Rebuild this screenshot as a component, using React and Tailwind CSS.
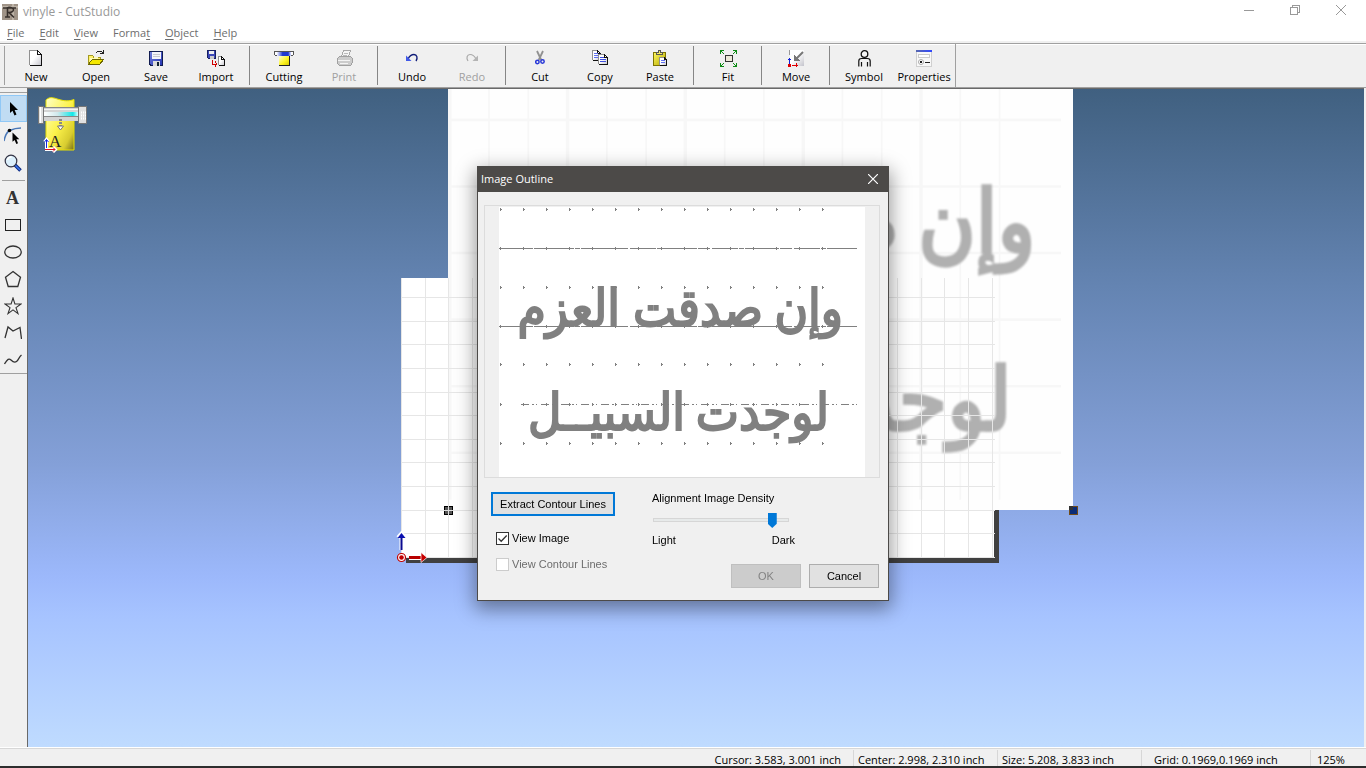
import React, { useState } from "react";

/* ---------- toolbar icons ---------- */

const Icon = ({ w = 16, h = 16, children, smooth }) => (
  <svg width={w} height={h} viewBox={`0 0 ${w} ${h}`} fill="none" shapeRendering={smooth ? "auto" : "crispEdges"} aria-hidden="true">
    {children}
  </svg>
);

const PageShape = ({ x = 0, y = 0, w = 12, h = 15, c = 4 }) => (
  <g transform={`translate(${x} ${y})`}>
    <path d={`M.5 .5H${w - c}L${w + 0.5} ${c + 0.5}V${h + 0.5}H.5z`} fill="url(#paper)" />
    <path d={`M.5 ${h}V.5H${w - c}`} stroke="#909090" />
    <path d={`M${w - c} .5v${c}h${c}M${w - c} .5L${w + 0.5} ${c + 0.5}V${h + 0.5}H.5`} stroke="#111" />
  </g>
);

const Floppy = ({ x = 0, y = 0 }) => (
  <g transform={`translate(${x} ${y})`}>
    <path d="M.5.5h13v14H2l-1.500-1.500z" fill="url(#blueMetal)" stroke="#111c50" />
    <path d="M3 1h9v7H3z" fill="#f4f4fa" />
    <path d="M4 3.500h7M4 5.500h7" stroke="#c8c8d0" />
    <path d="M4 10h7v5H4z" fill="#ddd" />
    <path d="M8 11h2v4H8z" fill="#123" />
  </g>
);

const icons = {
  New: (
    <Icon w={14}><PageShape w={12} h={15} /></Icon>
  ),
  Open: (
    <Icon w={18}>
      <path d="M1.500 14V5.500h4l1 1.500h7v3" fill="#fff36b" stroke="#a49a20" />
      <path d="M1.500 14.500L5 9.500h11.500l-4 5z" fill="#f4e800" stroke="#6d6700" />
      <path d="M3 8l8-1v2H5l-2 3z" fill="#fffbb8" />
      <path d="M9 3l2-2h3l2 2M13 3.500h4M16.500 0v4" stroke="#222" />
    </Icon>
  ),
  Save: (
    <Icon w={14} h={15}><Floppy /></Icon>
  ),
  Import: (
    <Icon w={19} h={17}>
      <path d="M.5.5h8v8h-7l-1-1z" fill="#3c48b8" stroke="#182060" />
      <path d="M2 1h5v3H2z" fill="#eee" />
      <path d="M3 6h4v3H3z" fill="#ccc" />
      <path d="M5.500 10v4h4M8 11.500l2 2.500-2 2.500" stroke="#d00000" />
      <PageShape x={11} y={6} w={6} h={9} c={3} />
    </Icon>
  ),
  Cutting: (
    <Icon w={20} h={16}>
      <path d="M.5 1.500h3v4h-2l-1-1zM16.500 1.500h3v3l-1 1h-2z" fill="#fff" stroke="#555" />
      <path d="M3 1h14v5H3z" fill="url(#cutterBar)" />
      <path d="M3 1.500h14" stroke="#555" />
      <path d="M5 6h10v9H5z" fill="url(#yellow)" />
      <path d="M5 15.500h10.500V6" stroke="#222" />
    </Icon>
  ),
  Print: (
    <Icon w={17}>
      <path d="M5.500 7l2-6.500h7l-2 6.500" fill="#f5f5f5" stroke="#a8a8a8" />
      <path d="M8 3.500h4M7 5.500h4" stroke="#bbb" />
      <path d="M1.500 8.500l2-2h11l2 2v4l-2 3h-11l-2-2z" fill="#ccc" stroke="#a0a0a0" />
      <path d="M2 10.500h12M4 13.500h8" stroke="#f4f4f4" />
    </Icon>
  ),
  Undo: (
    <Icon w={14} smooth>
      <path d="M3 9C4.500 6 7 4.500 9 4.500c3 0 4 3.500 2 6.500" stroke="#101c78" strokeWidth="1.400" />
      <path d="M1 5.500V11h5.500z" fill="#4059e8" />
    </Icon>
  ),
  Redo: (
    <Icon w={14} smooth>
      <path d="M11 9C9.500 6 7 4.500 5 4.500c-3 0-4 3.500-2 6.500" stroke="#a8a8a8" strokeWidth="1.200" />
      <path d="M13 5.500V11H7.500z" fill="#b4b4b4" />
    </Icon>
  ),
  Cut: (
    <Icon w={10} smooth>
      <path d="M2 1l4.300 9M8 1L3.700 10" stroke="#909090" strokeWidth="1.800" />
      <circle cx="2.400" cy="12" r="1.700" stroke="#2838d8" strokeWidth="1.500" />
      <circle cx="7.500" cy="11.500" r="1.700" stroke="#2838d8" strokeWidth="1.500" />
    </Icon>
  ),
  Copy: (
    <Icon w={17}>
      <PageShape w={8} h={10} c={3} />
      <path d="M2 3.500h4M2 5.500h4M2 7.500h4" stroke="#6070f0" />
      <PageShape x={6} y={4} w={9} h={10} c={3} />
      <path d="M8 7.500h4M8 9.500h6M8 11.500h6" stroke="#4050e0" />
    </Icon>
  ),
  Paste: (
    <Icon w={15} h={17}>
      <path d="M.5 2.500h12v13H.5z" fill="url(#clip)" stroke="#7d7400" />
      <path d="M3.500 4.500v-2h2v-2h2v2h2v2z" fill="#f5ec60" stroke="#555" />
      <PageShape x={6} y={7} w={7} h={8} c={2} />
      <path d="M8 10.500h4M8 12.500h4" stroke="#6070f0" />
    </Icon>
  ),
  Fit: (
    <Icon w={17} h={17}>
      <path d="M5 5.500h7v6H5z" fill="#ece9d8" stroke="#333" />
      <path d="M.5 4V.5H4M13 .5h3.500V4M16.500 13v3.500H13M4 16.500H.5V13M1 1l3 3M16 1l-3 3M16 16l-3-3M1 16l3-3" stroke="#0c8a14" />
    </Icon>
  ),
  Move: (
    <Icon w={17} h={17}>
      <path d="M2 0h14v16H2z" fill="url(#paper)" />
      <path d="M1.500 0v5" stroke="#999" />
      <path d="M15 2L8 9" stroke="#777" strokeWidth="2" shapeRendering="auto" />
      <path d="M6 5v6h6z" fill="#777" />
      <path d="M1.500 14V8M0 9.500h3" stroke="#1020d8" />
      <path d="M0 14h3v3H0zM4 15h6v1H4zM8 13h1v4H8z" fill="#e00000" />
    </Icon>
  ),
  Symbol: (
    <Icon w={13} h={17} smooth>
      <circle cx="6.500" cy="4" r="3.300" fill="#f6f6f6" stroke="#111" strokeWidth="1.300" />
      <path d="M.8 16.500V11c0-2 1.200-2.500 2.700-2.500h6c1.500 0 2.700.6 2.700 2.500v5.500M3.500 16.500V12M9.500 16.500V12" stroke="#111" strokeWidth="1.200" />
    </Icon>
  ),
  Properties: (
    <Icon w={16} h={17}>
      <path d="M.5.5h15v16H.5z" fill="#f8f8f8" stroke="#d0d0d0" />
      <path d="M0 0h16v2H0z" fill="url(#titleBlue)" />
      <path d="M2.500 4.500h11v3h-11z" fill="#fff" stroke="#ccc" />
      <circle cx="5" cy="12" r="2.500" fill="#fff" stroke="#aaa" shapeRendering="auto" />
      <path d="M4 11h2v2H4zM9 11.500h5v1H9z" fill="#222" />
    </Icon>
  ),
};

const GradientDefs = () => (
  <svg width="0" height="0" className="absolute" aria-hidden="true">
    <defs>
      <linearGradient id="paper" x1="0" y1="0" x2="1" y2="1">
        <stop offset=".45" stopColor="#fff" /><stop offset="1" stopColor="#c4c4cc" />
      </linearGradient>
      <linearGradient id="blueMetal" x1="0" y1="0" x2="1" y2="1">
        <stop offset="0" stopColor="#7884e0" /><stop offset="1" stopColor="#2030b0" />
      </linearGradient>
      <linearGradient id="cutterBar" x1="0" x2="1">
        <stop offset="0" stopColor="#f4f6ff" /><stop offset=".4" stopColor="#2038d0" /><stop offset=".8" stopColor="#2038d0" /><stop offset="1" stopColor="#e4e8ff" />
      </linearGradient>
      <linearGradient id="yellow" x1="0" y1="0" x2="1" y2="1">
        <stop offset="0" stopColor="#ffffd0" /><stop offset=".6" stopColor="#fdf320" /><stop offset="1" stopColor="#d8cc00" />
      </linearGradient>
      <linearGradient id="clip" x1="0" y1="0" x2="1" y2="1">
        <stop offset="0" stopColor="#fff860" /><stop offset="1" stopColor="#b4a800" />
      </linearGradient>
      <linearGradient id="titleBlue" x1="0" x2="1">
        <stop offset="0" stopColor="#5868b0" /><stop offset="1" stopColor="#3048ff" />
      </linearGradient>
      <linearGradient id="roll" x1="0" y1="0" x2="1" y2="1">
        <stop offset="0" stopColor="#ffffc8" /><stop offset=".5" stopColor="#fcf24a" /><stop offset=".8" stopColor="#d8cc30" /><stop offset="1" stopColor="#777018" />
      </linearGradient>
      <linearGradient id="rail" x1="0" x2="1">
        <stop offset="0" stopColor="#fff" /><stop offset=".4" stopColor="#d0e8ec" /><stop offset=".85" stopColor="#10e8e8" /><stop offset="1" stopColor="#d8ffff" />
      </linearGradient>
    </defs>
  </svg>
);

const toolGroups = [
  ["New", "Open", "Save", "Import"],
  ["Cutting", "Print"],
  ["Undo", "Redo"],
  ["Cut", "Copy", "Paste"],
  ["Fit"],
  ["Move"],
  ["Symbol", "Properties"],
];
const disabledTools = ["Print", "Redo"];

const ToolbarButton = ({ name }) => {
  const off = disabledTools.includes(name);
  return (
    <button
      type="button"
      disabled={off}
      className={`flex w-[60px] shrink-0 flex-col items-center ${off ? "text-[#a0a0a0]" : "text-black"}`}
    >
      <span className="flex h-[18px] items-center justify-center">{icons[name]}</span>
      <span className="mt-0.5 text-[11px] leading-4">{name}</span>
    </button>
  );
};

const Toolbar = () => (
  <div role="toolbar" aria-label="Main" className="flex h-[45px] shrink-0 border-t border-b border-t-[#a0a0a0] border-b-[#a0a0a0] bg-[#f0f0f0] shadow-[inset_0_1px_0_#fff]">
    <div className="my-0.5 ml-1 mr-px w-px bg-[#a0a0a0]" />
    <div className="flex items-start pt-[5px]">
      {toolGroups.map((group, i) => (
        <React.Fragment key={group[0]}>
          {i > 0 && <div className="ml-[3px] mr-1 -mt-[3px] h-[39px] w-px bg-[#868686]" />}
          {group.map((name) => <ToolbarButton key={name} name={name} />)}
        </React.Fragment>
      ))}
    </div>
    <div className="ml-px w-px bg-[#a0a0a0]" />
  </div>
);

/* ---------- side tool palette ---------- */

const Pointer = ({ x = 0, y = 0 }) => (
  <path transform={`translate(${x} ${y})`} d="M0 0v11l2.500-2.300L4.500 13.500l2-1L4.600 8H8z" fill="#000" />
);

const sideTools = [
  ["Select", <Icon w={18} h={18} smooth><Pointer x={6} y={2} /></Icon>],
  ["Edit points", (
    <Icon w={18} h={18} smooth>
      <path d="M0 14C1 9 3 5 5.500 3.500 9 2 13 1 17 1" stroke="#4a78b8" strokeWidth="1.500" />
      <circle cx="5.500" cy="3.500" r="1.800" fill="#000" />
      <g transform="translate(8.500 5.500) scale(.85)"><Pointer /></g>
    </Icon>
  )],
  ["Zoom", (
    <Icon w={18} h={18} smooth>
      <path d="M11 11l5.500 5.500" stroke="#0a2880" strokeWidth="3.500" />
      <path d="M11 11l5 5" stroke="#3c78f0" strokeWidth="1.500" />
      <circle cx="7" cy="7" r="5.800" fill="#dcf0fc" stroke="#334" strokeWidth="1.200" />
      <path d="M3.500 6C4 4 5.500 3 7.500 3" stroke="#fff" strokeWidth="1.500" />
    </Icon>
  )],
  null,
  ["Text", <span className="font-['Liberation_Serif',serif] text-lg leading-none font-bold text-[#333]">A</span>],
  ["Rectangle", <Icon w={18} h={18}><path d="M1.500 3.500h15v11h-15z" stroke="#222" strokeWidth="1" /></Icon>],
  ["Ellipse", <Icon w={18} h={18} smooth><ellipse cx="9" cy="9" rx="8.300" ry="6" stroke="#333" strokeWidth="1.300" /></Icon>],
  ["Polygon", <Icon w={18} h={18} smooth><path d="M9 1.500l7.500 5.700-2.700 9.300H4.200L1.500 7.200z" stroke="#333" strokeWidth="1.300" /></Icon>],
  ["Star", <Icon w={18} h={18} smooth><path d="M9 1l1.900 6H17l-5 3.600 2 6-5-3.700-5 3.700 2-6L1 7h6.100z" stroke="#333" strokeWidth="1.100" /></Icon>],
  ["Polyline", <Icon w={18} h={18} smooth><path d="M1 14L4 3l5 4 7-3.500L17.500 15" stroke="#333" strokeWidth="1.300" /></Icon>],
  ["Curve", <Icon w={18} h={18} smooth><path d="M.5 13c3-5 4.500-6 6.500-4s3.500 3 5.500 1.500S15 6 17.500 4" stroke="#333" strokeWidth="1.300" /></Icon>],
];

const Palette = () => (
  <div className="w-[27px] shrink-0 bg-[#f0f0f0] pt-1">
    <div className="flex flex-col border-t border-b border-[#a0a0a0] pt-0.5">
      {sideTools.map((tool, i) =>
        tool ? (
          <button
            key={tool[0]}
            type="button"
            aria-label={tool[0]}
            className={`flex h-[27px] items-center justify-center pr-0.5 ${i === 0 ? "border border-[#90c8f6] bg-[#c0dcf3]" : ""}`}
          >
            {tool[1]}
          </button>
        ) : (
          <div key="sep" className="mx-0.5 mt-1 mb-[3px] h-px bg-[#a0a0a0]" />
        )
      )}
    </div>
  </div>
);

/* ---------- lettering artwork ---------- */

const words = [
  { t: "وإن", x: 344, y: 119 },
  { t: "صدقت", x: 264, y: 119 },
  { t: "العزم", x: 121, y: 119 },
  { t: "لوجدت", x: 330, y: 223 },
  { t: "السبيــل", x: 186, y: 223 },
];

const Lettering = ({ ink, className, traced }) => {
  const cols = Array.from({ length: 15 }, (_, i) => 1 + i * 23);
  const rows = [2, 41, 80, 119, 157, 197, 236];
  return (
    <svg viewBox="0 0 366 270" className={className} shapeRendering={traced ? "crispEdges" : "auto"}>
      {traced ? (
        <g stroke={ink}>
          <path d="M0 41.500h358M0 119.500h358" strokeDasharray="34 1 12 2 26 1 5 1" />
          <path d="M22 197.500h336" strokeDasharray="8 3 2 2 1 4" />
          {rows.map((y) => cols.map((x) => <path key={`${x}-${y}`} d={`M${x} ${y}h2M${x + 0.5} ${y - 1}v3`} />))}
        </g>
      ) : (
        <g stroke="#f7f7f7">
          {[41, 80, 119, 158, 197, 236].map((y) => <path key={y} d={`M0 ${y}.500H359`} strokeWidth="1.500" />)}
          {cols.map((x, i) => <path key={x} d={`M${x} 0V264`} strokeWidth={i % 3 ? 1 : 2} />)}
        </g>
      )}
      <g
        fill={ink}
        stroke={ink}
        strokeWidth="2"
        direction="rtl"
        fontFamily="'DejaVu Sans Condensed','DejaVu Sans',sans-serif"
        fontSize="51"
        className={traced ? "" : "blur-[0.5px]"}
      >
        {words.map((w) => <text key={w.t} x={w.x} y={w.y}>{w.t}</text>)}
      </g>
    </svg>
  );
};

/* ---------- drawing area ---------- */

const GRID = 23.63;

const PageGrid = () => (
  <svg className="absolute top-[189px] left-[373px]" width="594" height="280" shapeRendering="crispEdges" aria-hidden="true">
    {Array.from({ length: 26 }, (_, i) => <path key={i} d={`M${Math.round(i * GRID) + 0.5} 0V280`} stroke="#e6e6e6" />)}
    {Array.from({ length: 12 }, (_, i) => <path key={i} d={`M0 ${279.5 - Math.round(i * GRID)}H594`} stroke="#e6e6e6" />)}
  </svg>
);

const CutterBadge = () => (
  <svg className="absolute top-2 left-2.5" width="50" height="56" viewBox="0 0 50 56" aria-label="Cutting area">
    <path d="M8 3c4-4 8-2 13-.5 5 1.500 10 2 15 0V53H8z" fill="url(#roll)" stroke="#e8e000" strokeWidth="1" />
    <path d="M6 11h34v13H6z" fill="#d4d4d4" />
    <path d="M6 15h34v4H6z" fill="url(#rail)" />
    <path d="M6 10.500h34M6 19.500h34" stroke="#888" />
    <path d="M6 12.500h34" stroke="#f4f4f4" />
    <path d="M.5 9.500h5v17h-5zM40.500 9.500h8v17h-8z" fill="#e0e0e0" stroke="#777" />
    <path d="M2.500 10v16" stroke="#fff" />
    <path d="M43 15.500h5M43 18.500h5M43 21.500h5" stroke="#fff" strokeWidth="2" strokeDasharray="1 1" />
    <path d="M22.500 22v7" stroke="#888" strokeWidth="3" strokeDasharray="2 1" />
    <path d="M19.500 29h6L22.500 33z" fill="#fff" stroke="#777" />
    <text x="11" y="50" fontSize="17" fontFamily="'Liberation Serif',serif" fill="#222">A</text>
    <path d="M8.500 53V43M6.500 45l2-2.500 2 2.500" fill="none" stroke="#fff" strokeWidth="3" />
    <path d="M8.500 51V43M6.500 45l2-2.500 2 2.500" fill="none" stroke="#1528e0" />
    <path d="M7 52.500h10M15 50l2.500 2.500L15 55" fill="none" stroke="#fff" strokeWidth="3" />
    <path d="M7 52.500h10M15 50.500l2 2-2 2" fill="none" stroke="#e01020" />
  </svg>
);

const OriginMark = () => (
  <svg className="absolute top-[441px] left-[366px]" width="36" height="36" viewBox="0 0 36 36" fill="none" aria-hidden="true">
    <path d="M7.500 20V6M4 7.500l3.500-4 3.500 4" stroke="#fff" strokeWidth="4" />
    <path d="M7.500 20V5" stroke="#0a0a90" strokeWidth="2" />
    <path d="M3.500 8l4-5 4 5z" fill="#0a10b0" />
    <path d="M15 27.500h13" stroke="#fff" strokeWidth="5" />
    <path d="M15 27.500h13" stroke="#b80000" strokeWidth="3" />
    <path d="M27 22.500l6 5-6 5z" fill="#c80000" stroke="#fff" strokeWidth=".7" />
    <circle cx="7.500" cy="27.500" r="4" fill="#fff" stroke="#c00000" strokeWidth="1.200" />
    <circle cx="7.500" cy="27.500" r="2.300" fill="#c00000" />
  </svg>
);

const Workspace = () => (
  <main className="relative mr-0.5 min-w-0 flex-1 overflow-hidden border-t border-l border-[#696969] bg-[linear-gradient(180deg,#406080_0%,#6484b2_30%,#84a0d8_57%,#9cb8fb_74%,#a6c3ff_80%,#bfdbff_100%)]">
    <div className="absolute top-[189px] left-[373px] h-[280px] w-[593px] bg-white shadow-[5px_5px_0_#404040]" />
    <Lettering ink="#b0b0b0" className="absolute -top-10 left-[420px] h-[461px] w-[625px] bg-[#fefefe]" />
    <PageGrid />
    <CutterBadge />
    <OriginMark />
    <svg className="absolute top-[417px] left-[416px]" width="9" height="9" shapeRendering="crispEdges" aria-hidden="true">
      <path d="M.5.5h8v8h-8z" fill="#555" stroke="#000" />
      <path d="M4.500 0v9M0 4.500h9" stroke="#ddd" />
    </svg>
    <svg className="absolute top-[417px] left-[1041px]" width="9" height="9" shapeRendering="crispEdges" aria-hidden="true">
      <path d="M.5.5h8v8h-8z" fill="#0a2c78" stroke="#704a18" />
      <path d="M0 0h4v4H0z" fill="#333" />
    </svg>
  </main>
);

/* ---------- dialog ---------- */

const ImageOutlineDialog = () => {
  const [showImage, setShowImage] = useState(true);
  const [density, setDensity] = useState(91);
  return (
    <div className="pointer-events-none fixed inset-0 z-10 flex items-center justify-center pb-px">
      <div
        role="dialog"
        aria-labelledby="dlg-title"
        className="pointer-events-auto w-[412px] border border-[#4c4a48] bg-[#f0f0f0] font-['Liberation_Sans',Arial,sans-serif] text-[11px] leading-4 text-black shadow-[0_6px_18px_2px_rgba(0,0,0,0.4)]"
      >
        <div className="flex h-[25px] items-center justify-between bg-[#4c4a48] pr-2.5 pb-0.5 pl-[3px] text-white">
          <h2 id="dlg-title" className="font-['Open_Sans','Noto_Sans',sans-serif] text-[11px]">Image Outline</h2>
          <button type="button" aria-label="Close">
            <svg width="10" height="10" viewBox="0 0 10 10"><path d="M0 0l10 10M10 0L0 10" stroke="#fff" strokeWidth="1.200" /></svg>
          </button>
        </div>
        <div className="px-2 pt-[13px] pb-3">
          <div className="-ml-0.5 flex justify-center border border-[#dcdcdc] pt-px">
            {showImage ? <Lettering ink="#808080" traced className="h-[270px] w-[366px] bg-white" /> : <div className="h-[270px] w-[366px] bg-white" />}
          </div>
          <div className="flex pt-3.5">
            <div className="flex w-[161px] flex-col items-start pl-[5px]">
              <button type="button" className="h-6 w-[124px] border-2 border-[#0078d7] bg-[#e1e1e1] leading-4">Extract Contour Lines</button>
              <label className="mt-3.5 ml-[5px] flex items-center gap-[3px]">
                <span className="relative flex">
                  <input type="checkbox" checked={showImage} onChange={(e) => setShowImage(e.target.checked)} className="peer size-[13px] appearance-none border border-[#333] bg-white" />
                  <svg className="pointer-events-none absolute inset-0 hidden peer-checked:block" width="13" height="13" viewBox="0 0 13 13" fill="none" aria-hidden="true">
                    <path d="M2.500 6.500l2.700 2.700L10.700 3.500" stroke="#333" strokeWidth="1.300" />
                  </svg>
                </span>
                View Image
              </label>
              <label className="mt-2.5 ml-[5px] flex items-center gap-[3px] text-[#6d6d6d]">
                <input type="checkbox" disabled className="size-[13px] appearance-none border border-[#ccc] bg-white" />
                View Contour Lines
              </label>
            </div>
            <div className="flex flex-1 flex-col pl-[5px]">
              <label htmlFor="density" className="-mt-0.5">Alignment Image Density</label>
              <input
                id="density"
                type="range"
                min="0"
                max="100"
                value={density}
                onChange={(e) => setDensity(Number(e.target.value))}
                className="mt-1.5 ml-px h-4 w-[136px] appearance-none bg-transparent [&::-webkit-slider-runnable-track]:h-1 [&::-webkit-slider-runnable-track]:border [&::-webkit-slider-runnable-track]:border-[#d6d6d6] [&::-webkit-slider-runnable-track]:bg-[#e7eaea] [&::-webkit-slider-thumb]:-mt-1.5 [&::-webkit-slider-thumb]:h-[15px] [&::-webkit-slider-thumb]:w-[9px] [&::-webkit-slider-thumb]:appearance-none [&::-webkit-slider-thumb]:bg-[#0078d7] [&::-webkit-slider-thumb]:[clip-path:polygon(0_0,100%_0,100%_72%,50%_100%,0_72%)]"
              />
              <div className="mt-1 flex w-[143px] justify-between"><span>Light</span><span>Dark</span></div>
              <div className="mt-4 mr-px flex justify-end gap-2">
                <button type="button" disabled className="h-6 w-[70px] border border-[#bfbfbf] bg-[#ccc] text-[#838383]">OK</button>
                <button type="button" className="h-6 w-[70px] border border-[#adadad] bg-[#e1e1e1]">Cancel</button>
              </div>
            </div>
          </div>
        </div>
      </div>
    </div>
  );
};

/* ---------- window frame ---------- */

const TitleBar = () => (
  <header className="flex h-6 shrink-0 items-center bg-white pl-0.5 text-[#999]">
    <svg width="16" height="16" viewBox="0 0 16 16" aria-hidden="true">
      <path d="M0 0h16v16H0z" fill="#a09488" />
      <path d="M0 3h16M11 0v16" stroke="#beb4a8" strokeWidth="2" />
      <path d="M1 4h13M5.500 3v10M3 13h5M6 3.500c7-1 7 5 1 5l5 5" stroke="#37302c" strokeWidth="1.600" fill="none" />
    </svg>
    <h1 className="ml-[5px] flex-1 text-xs">vinyle - CutStudio</h1>
    <div className="-mt-1 mr-0.5 flex text-[#999]">
      <button type="button" aria-label="Minimize" className="flex h-5 w-[46px] items-center justify-center">
        <svg width="10" height="10" shapeRendering="crispEdges"><path d="M0 5.500h10" stroke="currentColor" /></svg>
      </button>
      <button type="button" aria-label="Restore" className="flex h-5 w-[46px] items-center justify-center">
        <svg width="10" height="10" fill="none" shapeRendering="crispEdges"><path d="M.5 2.500h7v7h-7zM2.500 2.500v-2h7v7h-2" stroke="currentColor" /></svg>
      </button>
      <button type="button" aria-label="Close window" className="flex h-5 w-[46px] items-center justify-center">
        <svg width="10" height="10"><path d="M0 0l10 10M10 0L0 10" stroke="currentColor" /></svg>
      </button>
    </div>
  </header>
);

const menus = [["", "F", "ile"], ["", "E", "dit"], ["", "V", "iew"], ["Forma", "t", ""], ["", "O", "bject"], ["", "H", "elp"]];

const MenuBar = () => (
  <nav className="flex h-[19px] shrink-0 items-center gap-[15px] border-b-2 border-[#f0f0f0] bg-white pl-[7px] text-[11px] text-[#6d6d6d]">
    {menus.map(([a, k, b]) => (
      <button key={a + k + b} type="button" className="leading-4">
        {a}<span className="underline underline-offset-2">{k}</span>{b}
      </button>
    ))}
  </nav>
);

const StatusBar = () => (
  <footer className="flex h-[21px] shrink-0 items-stretch justify-end border-b-2 border-[#2d2d2d] bg-[#f0f0f0] pt-[3px] text-[11px] leading-5 text-black shadow-[inset_0_1px_0_#fff,inset_0_2px_0_#d7d7d7]">
    <span className="pr-3">Cursor: 3.583, 3.001 inch</span>
    <span className="w-36 border-l border-[#d7d7d7] pl-1">Center: 2.998, 2.310 inch</span>
    <span className="w-36 border-l border-[#d7d7d7] pl-1">Size: 5.208, 3.833 inch</span>
    <span className="w-[169px] border-l border-[#d7d7d7] pl-3">Grid: 0.1969,0.1969 inch</span>
    <span className="w-14 border-l border-[#d7d7d7] pl-1.5">125%</span>
  </footer>
);

export default function App() {
  return (
    <div className="flex h-screen flex-col overflow-hidden bg-[#f0f0f0] font-['Open_Sans','Noto_Sans',sans-serif]">
      <GradientDefs />
      <TitleBar />
      <MenuBar />
      <Toolbar />
      <div className="flex min-h-0 flex-1">
        <Palette />
        <Workspace />
      </div>
      <StatusBar />
      <ImageOutlineDialog />
    </div>
  );
}
